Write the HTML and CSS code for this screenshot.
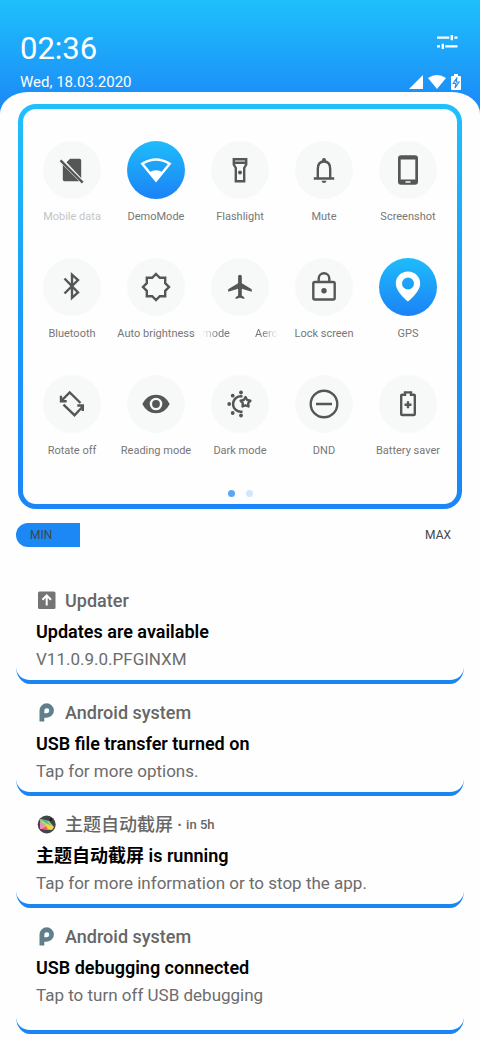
FILE: index.html
```html
<!DOCTYPE html>
<html lang="en">
<head>
<meta charset="utf-8">
<meta name="viewport" content="width=device-width, initial-scale=1">
<title>Quick settings</title>
<link rel="stylesheet" href="styles.css">
</head>
<body>
<header class="header">
  <div class="header-row">
    <time class="clock">02:36</time>
    <button class="settings" type="button" aria-label="Settings">
      <svg width="22" height="16" viewBox="0 0 22 16"><path d="M1 3.6h12.300M18.300 3.600H21.500M15.800 1v5.200M1 12.400h3M6.800 9.800V15M9.200 12.400h12.300" stroke="currentColor" stroke-width="2.400" fill="none"/></svg>
    </button>
  </div>
  <div class="header-row header-row-status">
    <span class="date">Wed, 18.03.2020</span>
    <span class="status">
      <svg width="14" height="14" viewBox="0 0 14 14"><path d="M14 0v14H0z" fill="currentColor"/></svg>
      <svg width="18" height="14" viewBox="0 0 18 14"><path d="M0 3Q9-3 18 3L9 14z" fill="currentColor"/></svg>
      <svg width="10" height="16" viewBox="0 0 10 16"><path d="M1 2h2V0h4v2h2q1 0 1 1v12q0 1-1 1H1q-1 0-1-1V3q0-1 1-1z" fill="currentColor"/><path d="M6 3.500 2.200 9.500H5L4 14 8 8H5.200z" fill="none" stroke="#1e8df8" stroke-width="1.100"/></svg>
    </span>
  </div>
</header>

<main class="sheet">
  <section class="panel" aria-label="Quick settings">
    <div class="tiles">
      <button class="tile tile-disabled" type="button">
        <svg class="tile-icon" viewBox="0 0 58 58"><path class="solid" d="M27 17.700h9.500q1.700 0 1.700 1.700V37L23.500 21.200zM19.800 24 36 40.300H21.500q-1.700 0-1.700-1.700z"/><path class="line" d="m17.500 19.300 22.200 22.400"/></svg>
        <span class="tile-label">Mobile data</span>
      </button>
      <button class="tile tile-on" type="button">
        <svg class="tile-icon" viewBox="0 0 58 58"><path class="line" d="M15.300 22.800Q29 14.200 42.700 22.800L29 39.600z"/><path class="solid" d="M22 31.500q7-4.600 14 0L29 40z"/></svg>
        <span class="tile-label">DemoMode</span>
      </button>
      <button class="tile" type="button">
        <svg class="tile-icon" viewBox="0 0 58 58"><path class="line" d="M22.800 18.200h12.400v5.300l-2 3.500v13.300h-8.400V27l-2-3.500zM22.800 21.800h12.400"/><circle class="solid" cx="29" cy="31.500" r="2"/></svg>
        <span class="tile-label">Flashlight</span>
      </button>
      <button class="tile" type="button">
        <svg class="tile-icon" viewBox="0 0 58 58"><path class="line" d="M22.800 37v-9q0-7.500 6.200-7.500t6.200 7.500v9M18.800 37.500h20.400"/><path class="solid" d="M27 20v-1a2 2 0 0 1 4 0v1zM26.500 39.800h5q-.5 2.200-2.500 2.200t-2.500-2.200z"/></svg>
        <span class="tile-label">Mute</span>
      </button>
      <button class="tile" type="button">
        <svg class="tile-icon" viewBox="0 0 58 58"><path class="solid" fill-rule="evenodd" d="M22 14.300h14q3 0 3 3v23.400q0 3-3 3H22q-3 0-3-3V17.300q0-3 3-3zM21.700 18.500v20h14.600v-20zM26.500 40.300v1.500h5v-1.500z"/></svg>
        <span class="tile-label">Screenshot</span>
      </button>

      <button class="tile" type="button">
        <svg class="tile-icon" viewBox="0 0 58 58"><path class="line" d="m21.500 20.500 13.500 14-6 5.300V16.700l6 5.300-13.500 13.500"/></svg>
        <span class="tile-label">Bluetooth</span>
      </button>
      <button class="tile" type="button">
        <svg class="tile-icon" viewBox="0 0 58 58"><path class="line" d="m29 16 3.800 3.800H38.200V25.200L42 29l-3.800 3.800v5.400H32.800L29 42l-3.800-3.800h-5.400V32.800L16 29l3.800-3.800v-5.400h5.400z"/></svg>
        <span class="tile-label">Auto brightness</span>
      </button>
      <button class="tile" type="button" aria-label="Aeroplane mode">
        <svg class="tile-icon" viewBox="0 0 58 58"><path class="solid" transform="translate(14.700 14.200) scale(1.240 1.220)" d="M21 16v-2l-8-5V3.500C13 2.670 12.330 2 11.500 2S10 2.670 10 3.500V9l-8 5v2l8-2.500V19l-2 1.500V22l3.500-1 3.500 1v-1.500L13 19v-5.500z"/></svg>
        <span class="tile-label tile-marquee"><span>mode</span><span>Aero</span></span>
      </button>
      <button class="tile" type="button">
        <svg class="tile-icon" viewBox="0 0 58 58"><rect class="line" x="18.300" y="24" width="21.400" height="17.500" rx="1.500"/><path class="line" d="M23.700 24v-3.500a5.300 5.300 0 0 1 10.600 0V24"/><circle class="solid" cx="29" cy="32.800" r="2.700"/></svg>
        <span class="tile-label">Lock screen</span>
      </button>
      <button class="tile tile-on" type="button">
        <svg class="tile-icon" viewBox="0 0 58 58"><path class="solid" fill-rule="evenodd" d="M29 13.500c-7 0-12.200 5.300-12.200 12C16.800 34 29 43.500 29 43.500S41.200 34 41.200 25.500c0-6.700-5.200-12-12.200-12zM29 19.500a6 6 0 1 1 0 12 6 6 0 0 1 0-12z"/></svg>
        <span class="tile-label">GPS</span>
      </button>

      <button class="tile" type="button">
        <svg class="tile-icon" viewBox="0 0 58 58"><path class="line" d="M37.500 28 26.700 17.500l-8.400 8.400M18 20.700v5.500h5.700M20.500 29.700l11 10.500 8.500-9M34.300 30.500h5.500V36"/></svg>
        <span class="tile-label">Rotate off</span>
      </button>
      <button class="tile" type="button">
        <svg class="tile-icon" viewBox="0 0 58 58"><path class="solid" fill-rule="evenodd" d="M15.300 29Q20 19.700 29 19.700T42.700 29Q38 38.300 29 38.300T15.300 29zM29 22.700a6.300 6.300 0 1 0 0 12.600 6.300 6.300 0 0 0 0-12.600z"/><circle class="solid" cx="29" cy="29" r="3.900"/></svg>
        <span class="tile-label">Reading mode</span>
      </button>
      <button class="tile" type="button">
        <svg class="tile-icon" viewBox="0 0 58 58"><path class="line" d="M31.500 21.500a7.700 7.700 0 1 0 0 15"/><path class="line" stroke-linejoin="round" d="m34.500 22 1.700 3 3.200.7-2.200 2.500.3 3.300-3-1.200-3 1.200.3-3.300-2.200-2.500 3.200-.7z"/><g class="solid"><circle cx="18.200" cy="29" r="1.900"/><circle cx="21.700" cy="20.700" r="1.900"/><circle cx="30" cy="17.500" r="1.900"/><circle cx="21.700" cy="38" r="1.900"/><circle cx="30" cy="40.500" r="1.900"/></g></svg>
        <span class="tile-label">Dark mode</span>
      </button>
      <button class="tile" type="button">
        <svg class="tile-icon" viewBox="0 0 58 58"><circle class="line" cx="29" cy="29" r="13.300"/><path class="line" d="M21 29h16"/></svg>
        <span class="tile-label">DND</span>
      </button>
      <button class="tile" type="button">
        <svg class="tile-icon" viewBox="0 0 58 58"><path class="line" d="M23 19.700h3v-2.300h6v2.300h3q.8 0 .8.800V39q0 1-1 1H23.200q-1 0-1-1V20.500q0-.8.800-.8zM29 26.200v7M25.500 29.700h7"/></svg>
        <span class="tile-label">Battery saver</span>
      </button>
    </div>
    <div class="pages"><span class="page page-current"></span><span class="page"></span></div>
  </section>

  <div class="brightness">
    <input class="brightness-range" type="range" min="0" max="100" value="14" aria-label="Brightness">
    <div class="brightness-labels"><span>MIN</span><span>MAX</span></div>
  </div>

  <section class="notes" aria-label="Notifications">
    <article class="note">
      <div class="note-head">
        <svg class="note-icon" viewBox="0 0 22 22"><rect x="2" y="1.500" width="17.500" height="17.500" rx="1.500" fill="#747474"/><path d="M10.700 15.500V5.500M6.400 9.800l4.300-4.300L15 9.800" fill="none" stroke="#fff" stroke-width="2"/></svg>
        <span class="note-app">Updater</span>
      </div>
      <h2 class="note-title">Updates are available</h2>
      <p class="note-text">V11.0.9.0.PFGINXM</p>
    </article>
    <article class="note">
      <div class="note-head">
        <svg class="note-icon" viewBox="0 0 22 22"><path fill="#5f7f8c" fill-rule="evenodd" d="M3.500 19.500V8.500a7.200 7.200 0 1 1 7.200 7.200H8.300v3.800zM8.300 11.200h2.300a2.500 2.500 0 1 0-2.300-2.500z"/></svg>
        <span class="note-app">Android system</span>
      </div>
      <h2 class="note-title">USB file transfer turned on</h2>
      <p class="note-text">Tap for more options.</p>
    </article>
    <article class="note">
      <div class="note-head">
        <svg class="note-icon" viewBox="0 0 22 22"><circle cx="10.700" cy="10.500" r="9" fill="#424448"/><path d="m4 5 9 2 5 6-13 2z" fill="#a8d878"/><path d="m4 5 6 1 5 6z" fill="#4ab98a"/><path d="M4 7v8l9 0z" fill="#ef8ac8"/><path d="m5 15 6-5 7 3-2 3z" fill="#f5d34a"/><path d="m5 15 5-3 2 3.500z" fill="#f0587a"/><circle cx="15" cy="5.500" r="1.400" fill="#1f2024"/></svg>
        <span class="note-app">主题自动截屏</span><span class="note-dot">·</span><span class="note-when">in 5h</span>
      </div>
      <h2 class="note-title">主题自动截屏 is running</h2>
      <p class="note-text">Tap for more information or to stop the app.</p>
    </article>
    <article class="note note-last">
      <div class="note-head">
        <svg class="note-icon" viewBox="0 0 22 22"><path fill="#5f7f8c" fill-rule="evenodd" d="M3.500 19.500V8.500a7.200 7.200 0 1 1 7.200 7.200H8.300v3.800zM8.300 11.200h2.300a2.500 2.500 0 1 0-2.300-2.500z"/></svg>
        <span class="note-app">Android system</span>
      </div>
      <h2 class="note-title">USB debugging connected</h2>
      <p class="note-text">Tap to turn off USB debugging</p>
    </article>
  </section>
</main>
</body>
</html>
```
FILE: styles.css
```css
* {
  box-sizing: border-box;
}

body {
  margin: 0;
  background: #fefefe;
  color: #000;
  font-family: Roboto, "Noto Sans CJK SC", sans-serif;
}

button {
  padding: 0;
  border: 0;
  background: none;
  color: inherit;
  font: inherit;
}

svg {
  display: block;
}

/* Header */
.header {
  padding: 30px 19px 28px 20px;
  background: linear-gradient(#1fc0fb, #1a84f7);
  color: #fff;
}

.header-row {
  display: flex;
  justify-content: space-between;
  align-items: flex-start;
}

.header-row-status {
  align-items: center;
  margin-top: 4px;
}

.clock {
  font-size: 31px;
  line-height: 38px;
}

.settings {
  margin: 4px 3px 0 0;
}

.date {
  font-size: 15px;
  line-height: 20px;
}

.status {
  display: flex;
  align-items: center;
  gap: 5px;
}

/* Sheet and tile panel */
.sheet {
  margin-top: -28px;
  padding: 12px 0 6px;
  border-radius: 28px 28px 0 0 / 22px 22px 0 0;
  background: #fefefe;
}

.panel {
  margin: 0 18px;
  padding: 32px 7px 7px;
  border: 5px solid transparent;
  border-radius: 18px;
  background:
    linear-gradient(#fefefe, #fefefe) padding-box,
    linear-gradient(#1fc0fb, #1a9cf9 50%, #1a86f7) border-box;
}

.tiles {
  display: grid;
  grid-template-columns: repeat(5, 1fr);
  row-gap: 33px;
}

.tile {
  display: flex;
  flex-direction: column;
  align-items: center;
  gap: 10px;
  min-width: 0;
  color: #555757;
}

.tile-icon {
  width: 58px;
  height: 58px;
  border-radius: 50%;
  background: #f7f9f9;
}

.tile-on .tile-icon {
  background: linear-gradient(#1fbcfb, #1b82f6);
  color: #fff;
}

.tile-label {
  color: #777;
  font-size: 11px;
  line-height: 16px;
  white-space: nowrap;
}

.tile-disabled .tile-label {
  color: #c4c4c4;
}

.tile-marquee {
  display: flex;
  justify-content: space-between;
  width: 76px;
  mask-image: linear-gradient(90deg, transparent, #000 16px, #000 60px, transparent);
}

.solid {
  fill: currentColor;
}

.line {
  fill: none;
  stroke: currentColor;
  stroke-width: 2.4;
}

.pages {
  display: flex;
  justify-content: center;
  gap: 11px;
  margin-top: 31px;
}

.page {
  width: 7px;
  height: 7px;
  border-radius: 50%;
  background: #cfe6fc;
}

.page-current {
  background: #5ba7f5;
}

/* Brightness */
.brightness {
  display: grid;
  margin: 14px 16px 0;
}

.brightness-range,
.brightness-labels {
  grid-area: 1 / 1;
}

.brightness-range {
  width: 100%;
  height: 24px;
  margin: 0;
  border-radius: 12px;
  appearance: none;
  background: linear-gradient(90deg, #1b88f6 64px, transparent 64px);
}

.brightness-range::-webkit-slider-thumb {
  width: 24px;
  height: 24px;
  appearance: none;
  background: transparent;
}

.brightness-labels {
  display: flex;
  justify-content: space-between;
  padding: 0 13px 0 14px;
  color: #3f464d;
  font-size: 12px;
  line-height: 24px;
  pointer-events: none;
}

/* Notifications */
.notes {
  margin: 25px 16px 0;
}

.note {
  padding: 17px 20px 7px;
  border-bottom: 4px solid #1a86f5;
  border-radius: 0 0 14px 14px / 0 0 17px 17px;
}

.note-last {
  padding-bottom: 21px;
}

.note-head {
  display: flex;
  align-items: center;
  height: 24px;
  margin-bottom: 6px;
  color: #666;
}

.note-icon {
  width: 22px;
  height: 22px;
  margin-right: 7px;
}

.note-app,
.note-dot {
  font-size: 18px;
  font-weight: 500;
  line-height: 24px;
}

.note-dot {
  margin: 0 4px;
}

.note-when {
  font-size: 13px;
  font-weight: 500;
  line-height: 24px;
}

.note-title {
  margin: 0;
  font-size: 18px;
  font-weight: 600;
  line-height: 26px;
}

.note-text {
  margin: 0;
  color: #6c6c6c;
  font-size: 17px;
  line-height: 28px;
}
```
